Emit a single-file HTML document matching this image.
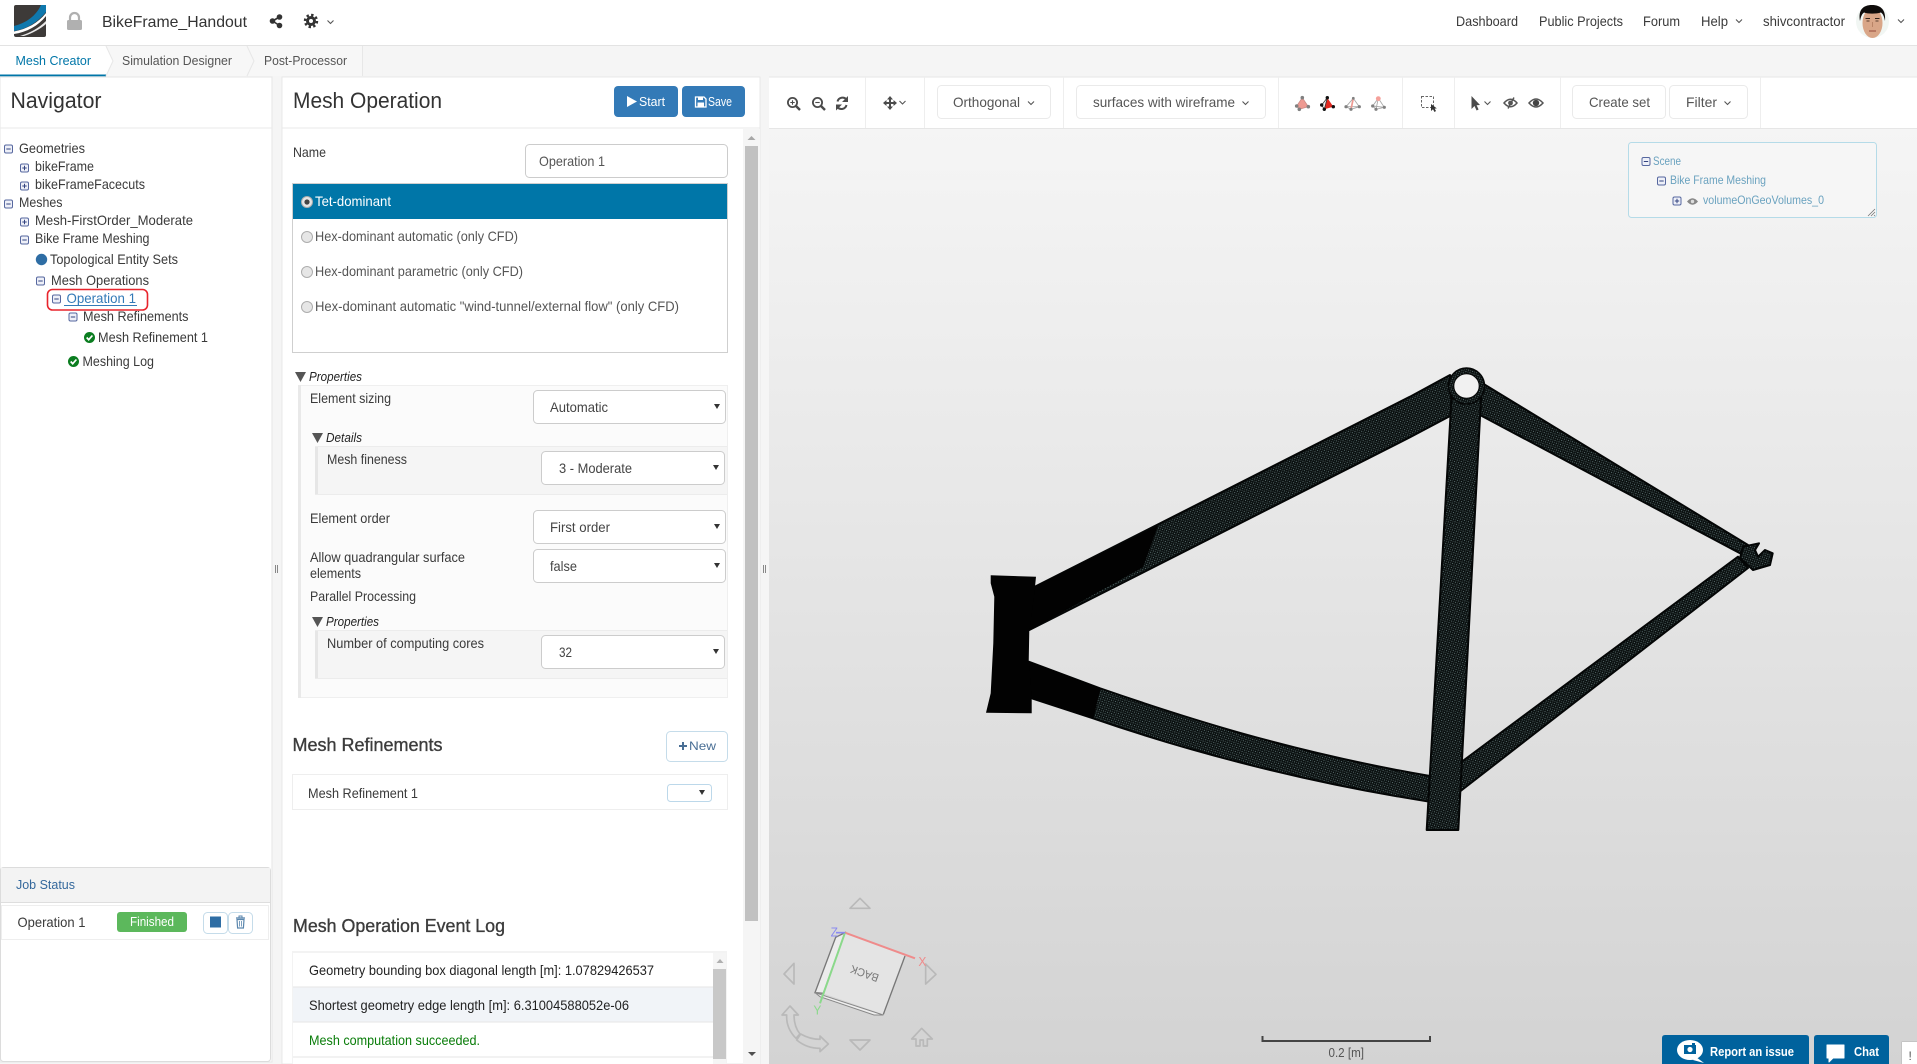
<!DOCTYPE html>
<html lang="en">
<head>
<meta charset="utf-8">
<title>BikeFrame_Handout</title>
<style>
html,body{margin:0;padding:0;width:1917px;height:1064px;overflow:hidden;background:#f5f5f5}
svg{display:block}
text{font-family:"Liberation Sans",sans-serif;font-size:14px;fill:#3a3a3a;white-space:pre}
.s13{font-size:13px}
.i{font-style:italic;fill:#222}
.h{font-size:22px;fill:#333}
.b{font-size:18px;fill:#3c3c3c;stroke:#3c3c3c;stroke-width:.35}
.v{fill:#555}
.sel{fill:#fff;stroke:#ccc;stroke-width:1}
.scn{font-size:12px;fill:#6aa2bf}
.bw{fill:#fff;font-weight:bold;font-size:13px}
.tb{fill:#fff;stroke:#eaeaea;stroke-width:1}
.ln{stroke:#e9e9e9;stroke-width:1}
.ch{fill:none;stroke:#555;stroke-width:1.1}
</style>
</head>
<body>
<svg xmlns="http://www.w3.org/2000/svg" width="1917" height="1064" viewBox="0 0 1917 1064">
<defs>
<linearGradient id="bg" x1="0" y1="0" x2="0" y2="1"><stop offset="0" stop-color="#f5f5f5"/><stop offset="1" stop-color="#d3d3d3"/></linearGradient>
<pattern id="m" width="3" height="3" patternUnits="userSpaceOnUse" patternTransform="rotate(-27)">
<rect width="3" height="3" fill="#0a0f0f"/><rect x="0" y="0" width="1" height="1" fill="#5f7575"/><rect x="1.5" y="1.5" width="1" height="1" fill="#3a4848"/>
</pattern>
<g id="tm"><rect x="-4" y="-4" width="8" height="8" rx="1.5" fill="#eef0f8" stroke="#56679f"/><path d="M-2.2 0H2.2" stroke="#33437f" stroke-width="1"/></g>
<g id="tp"><rect x="-4" y="-4" width="8" height="8" rx="1.5" fill="#eef0f8" stroke="#56679f"/><path d="M-2.2 0H2.2M0 -2.2V2.2" stroke="#33437f" stroke-width="1"/></g>
<g id="ck"><circle r="5.5" fill="#0b7d20"/><path d="M-2.8 0L-.8 2.2L2.9 -2" fill="none" stroke="#fff" stroke-width="1.7"/></g>
<g id="rd"><circle r="5.5" fill="#e6e6e6" stroke="#adadad"/></g>
<path id="ar" d="M-3 -2.5H3L0 2.5Z" fill="#333"/>
<path id="dt" d="M0 0H11L5.5 10Z" fill="#555"/>
<path id="cv" d="M-3 -1.5L0 1.5L3 -1.5" fill="none" stroke="#555" stroke-width="1.1"/>
</defs>

<!-- top bar -->
<rect width="1917" height="45" fill="#fff"/>
<rect y="45" width="1917" height="1" fill="#e3e3e3"/>
<!-- logo -->
<rect x="14" y="5" width="32" height="32" rx="2" fill="#3d3a38"/>
<path d="M46 5V12C38 22 27 29 14 31V26C26 23 36 16 41 5Z" fill="#0f78ad"/>
<path d="M46 16C38 26 27 32 14 34V31.5C27 29 38 23 46 13Z" fill="#fff"/>
<path d="M46 24C40 29 33 33 24 36H20C30 33 39 28 46 21Z" fill="#e9e9e9"/>
<!-- lock -->
<rect x="67" y="20" width="15" height="10" rx="1.5" fill="#b0b0b0"/>
<path d="M70 20V17.5a4.5 4.5 0 0 1 9 0V20" fill="none" stroke="#b0b0b0" stroke-width="2.2"/>
<text x="102" y="27" style="font-size:16px;fill:#333" textLength="145" lengthAdjust="spacingAndGlyphs">BikeFrame_Handout</text>
<!-- share -->
<g fill="#333"><circle cx="272.5" cy="21" r="2.8"/><circle cx="279.5" cy="17" r="2.8"/><circle cx="279.5" cy="25.5" r="2.8"/></g>
<path d="M272.5 21L279.5 17M272.5 21L279.5 25.5" stroke="#333" stroke-width="1.6"/>
<!-- gear -->
<circle cx="311" cy="21" r="5" fill="#333"/><circle cx="311" cy="21" r="6" fill="none" stroke="#333" stroke-width="2.4" stroke-dasharray="2.4 2.3"/><circle cx="311" cy="21" r="2" fill="#fff"/>
<use href="#cv" x="330.5" y="22"/>
<text x="1456" y="26" textLength="62" lengthAdjust="spacingAndGlyphs">Dashboard</text>
<text x="1539" y="26" textLength="84" lengthAdjust="spacingAndGlyphs">Public Projects</text>
<text x="1643" y="26" textLength="37" lengthAdjust="spacingAndGlyphs">Forum</text>
<text x="1701" y="26" textLength="27" lengthAdjust="spacingAndGlyphs">Help</text>
<use href="#cv" x="1739" y="21"/>
<text x="1763" y="26" textLength="82" lengthAdjust="spacingAndGlyphs">shivcontractor</text>
<!-- avatar -->
<circle cx="1872.5" cy="21.5" r="16.5" fill="#f1f6f3"/>
<ellipse cx="1872.5" cy="23" rx="10" ry="15" fill="#d9a688"/>
<path d="M1860 21C1858 10 1863 5 1872 5C1881 5 1886 10 1885 21C1884 16 1883 14 1881 12.5C1876 14 1868 14 1864 12.5C1862 14 1861 16 1860 21Z" fill="#0f0c0b"/>
<path d="M1865.5 18.5H1870M1875 18.5H1879.5" stroke="#33231b" stroke-width="1.1"/>
<path d="M1866.5 21H1869.5M1875.5 21H1878.5" stroke="#5a4030" stroke-width="1"/>
<path d="M1872.5 22V27" stroke="#b98467" stroke-width="1"/>
<path d="M1869 31H1876" stroke="#a5604f" stroke-width="1.3"/>
<use href="#cv" x="1901" y="21"/>

<!-- tabs -->
<rect y="46" width="362" height="30" fill="#f7f7f7"/>
<rect x="0" y="46" width="106" height="30" fill="#fff"/>
<rect x="0" y="74.5" width="106" height="1.8" fill="#0076a8"/>
<path d="M106 46L113 61L106 76" fill="#fff" stroke="#e7e7e7"/>
<path d="M247 46L254 61L247 76" fill="none" stroke="#e7e7e7"/>
<path d="M362.5 46V76" stroke="#e7e7e7"/>
<text x="15.5" y="65" style="fill:#0076a8" class="s13" textLength="75.5" lengthAdjust="spacingAndGlyphs">Mesh Creator</text>
<text x="122" y="65" class="s13" style="fill:#555" textLength="110" lengthAdjust="spacingAndGlyphs">Simulation Designer</text>
<text x="264" y="65" class="s13" style="fill:#555" textLength="83" lengthAdjust="spacingAndGlyphs">Post-Processor</text>

<!-- navigator -->
<rect x="0" y="77" width="272" height="985" fill="#fff" stroke="#e6e6e6"/>
<path d="M0 128H272" class="ln"/>
<text x="10.5" y="108" class="h" textLength="91" lengthAdjust="spacingAndGlyphs">Navigator</text>
<use href="#tm" x="8.5" y="149"/><text x="19" y="153" textLength="66" lengthAdjust="spacingAndGlyphs">Geometries</text>
<use href="#tp" x="24.5" y="168"/><text x="35" y="171" textLength="59" lengthAdjust="spacingAndGlyphs">bikeFrame</text>
<use href="#tp" x="24.5" y="186"/><text x="35" y="189" textLength="110" lengthAdjust="spacingAndGlyphs">bikeFrameFacecuts</text>
<use href="#tm" x="8.5" y="204"/><text x="19" y="207" textLength="43.5" lengthAdjust="spacingAndGlyphs">Meshes</text>
<use href="#tp" x="24.5" y="222"/><text x="35" y="225" textLength="158" lengthAdjust="spacingAndGlyphs">Mesh-FirstOrder_Moderate</text>
<use href="#tm" x="24.5" y="240"/><text x="35" y="243" textLength="114.5" lengthAdjust="spacingAndGlyphs">Bike Frame Meshing</text>
<circle cx="41.5" cy="259.5" r="5.7" fill="#2e6da4"/><text x="50" y="264" textLength="128" lengthAdjust="spacingAndGlyphs">Topological Entity Sets</text>
<use href="#tm" x="40.5" y="281"/><text x="51" y="285" textLength="98" lengthAdjust="spacingAndGlyphs">Mesh Operations</text>
<rect x="47.5" y="289.5" width="100" height="20.5" rx="5" fill="#fff" stroke="#e8242c" stroke-width="1.6"/>
<use href="#tm" x="56.5" y="299"/>
<text x="66.5" y="303" style="fill:#337ab7" textLength="69.5" lengthAdjust="spacingAndGlyphs">Operation 1</text>
<path d="M64 305.5H137" stroke="#337ab7"/>
<use href="#tm" x="73" y="317"/><text x="83" y="321" textLength="105.5" lengthAdjust="spacingAndGlyphs">Mesh Refinements</text>
<use href="#ck" x="89.5" y="337.5"/><text x="98" y="342" textLength="110" lengthAdjust="spacingAndGlyphs">Mesh Refinement 1</text>
<use href="#ck" x="73.5" y="361.5"/><text x="82.5" y="366" textLength="71.5" lengthAdjust="spacingAndGlyphs">Meshing Log</text>

<!-- job status -->
<rect x="0.5" y="867.5" width="270" height="194" rx="3" fill="#fff" stroke="#dcdcdc"/>
<rect x="1" y="868" width="269" height="34" fill="#f3f3f3"/>
<path d="M1 902.5H270" stroke="#dedede"/>
<text x="16" y="889" style="fill:#34689c" class="s13" textLength="59" lengthAdjust="spacingAndGlyphs">Job Status</text>
<rect x="1.5" y="905.5" width="267" height="34" fill="#fff" stroke="#eee"/>
<text x="17.5" y="927" textLength="68" lengthAdjust="spacingAndGlyphs">Operation 1</text>
<rect x="117" y="912" width="70" height="20" rx="3" fill="#5cb85c"/>
<text x="130" y="926" style="fill:#fff;font-size:13px" textLength="44" lengthAdjust="spacingAndGlyphs">Finished</text>
<rect x="203.5" y="912.5" width="24" height="21" rx="4" fill="#fff" stroke="#c5dcea"/>
<rect x="210" y="916.5" width="11" height="11" fill="#2e6da4"/>
<rect x="228.5" y="912.5" width="24" height="21" rx="4" fill="#fff" stroke="#c5dcea"/>
<path d="M237 919.5H244L243.4 928H237.6Z" fill="none" stroke="#5a86ad" stroke-width="1.2"/><path d="M239.5 921V926.5M241.5 921V926.5" stroke="#5a86ad" stroke-width=".8"/><path d="M236 918H245" stroke="#5a86ad" stroke-width="1.3"/><path d="M239 917.5V916H242V917.5" fill="none" stroke="#5a86ad"/>

<!-- splitters -->
<path d="M275.5 565V573M277.5 565V573M763.5 565V573M765.5 565V573" stroke="#888" stroke-width="1"/>

<!-- mesh operation panel -->
<rect x="282" y="77" width="478" height="987" fill="#fff" stroke="#e8e8e8"/>
<path d="M282 128H760" class="ln"/>
<text x="293" y="108" class="h" textLength="149" lengthAdjust="spacingAndGlyphs">Mesh Operation</text>
<rect x="614" y="86" width="64" height="31" rx="4" fill="#337ab7"/>
<path d="M627 96L637 101.5L627 107Z" fill="#fff"/>
<text x="639" y="106" class="s13" style="fill:#fff" textLength="26" lengthAdjust="spacingAndGlyphs">Start</text>
<rect x="682" y="86" width="63" height="31" rx="4" fill="#337ab7"/>
<path d="M695.5 97H704L706 99V107H695.5Z" fill="none" stroke="#fff" stroke-width="1.3"/><rect x="698" y="97" width="5" height="3" fill="#fff"/><rect x="697.5" y="102.5" width="6.5" height="4" fill="#fff"/>
<text x="708" y="106" class="s13" style="fill:#fff" textLength="24" lengthAdjust="spacingAndGlyphs">Save</text>
<!-- scrollbar -->
<rect x="743" y="129" width="17" height="935" fill="#f5f5f5"/>
<rect x="745" y="146" width="13" height="775" fill="#c1c1c1"/>
<path d="M747.5 140L751.5 136L755.5 140Z" fill="#a8a8a8"/>
<path d="M748 1052H756L752 1056Z" fill="#505050"/>

<text x="293" y="157" textLength="33" lengthAdjust="spacingAndGlyphs">Name</text>
<rect x="525.5" y="144.5" width="202" height="33" rx="4" class="sel"/>
<text x="539" y="166" style="fill:#555" textLength="66" lengthAdjust="spacingAndGlyphs">Operation 1</text>

<rect x="292.5" y="183.5" width="435" height="169" fill="#fff" stroke="#cfcfcf"/>
<rect x="293" y="184" width="434" height="35" fill="#0076a8"/>
<use href="#rd" x="307" y="202"/><circle cx="307" cy="202" r="2.6" fill="#444"/>
<text x="315" y="206" style="fill:#fff" textLength="76" lengthAdjust="spacingAndGlyphs">Tet-dominant</text>
<use href="#rd" x="307" y="237"/>
<text x="315" y="241" class="v" textLength="203" lengthAdjust="spacingAndGlyphs">Hex-dominant automatic (only CFD)</text>
<use href="#rd" x="307" y="272"/>
<text x="315" y="276" class="v" textLength="208" lengthAdjust="spacingAndGlyphs">Hex-dominant parametric (only CFD)</text>
<use href="#rd" x="307" y="307"/>
<text x="315" y="311" class="v" textLength="364" lengthAdjust="spacingAndGlyphs">Hex-dominant automatic "wind-tunnel/external flow" (only CFD)</text>

<!-- properties -->
<use href="#dt" x="295" y="372"/>
<text x="309" y="381" class="i s13" textLength="53" lengthAdjust="spacingAndGlyphs">Properties</text>
<rect x="298.5" y="385.5" width="429" height="312" fill="#fbfbfb" stroke="#efefef"/>
<rect x="298" y="385" width="3" height="313" fill="#e9e9e9"/>
<text x="310" y="403" textLength="81" lengthAdjust="spacingAndGlyphs">Element sizing</text>
<rect x="533.5" y="390.5" width="192" height="33" rx="4" class="sel"/>
<text x="550" y="412" style="fill:#444" textLength="58" lengthAdjust="spacingAndGlyphs">Automatic</text>
<use href="#ar" x="717" y="406.5"/>

<use href="#dt" x="312" y="433"/>
<text x="326" y="442" class="i s13" textLength="36" lengthAdjust="spacingAndGlyphs">Details</text>
<rect x="315" y="446" width="412" height="49" fill="#f5f5f5"/>
<rect x="315" y="446" width="3" height="49" fill="#e6e6e6"/>
<path d="M315 446.5H727M315 494.5H727" stroke="#ececec"/>
<text x="327" y="464" textLength="80" lengthAdjust="spacingAndGlyphs">Mesh fineness</text>
<rect x="541.5" y="451.5" width="183" height="33" rx="4" class="sel"/>
<text x="559" y="473" style="fill:#444" textLength="73" lengthAdjust="spacingAndGlyphs">3 - Moderate</text>
<use href="#ar" x="716" y="467.5"/>

<text x="310" y="523" textLength="80" lengthAdjust="spacingAndGlyphs">Element order</text>
<rect x="533.5" y="510.5" width="192" height="33" rx="4" class="sel"/>
<text x="550" y="532" style="fill:#444" textLength="60" lengthAdjust="spacingAndGlyphs">First order</text>
<use href="#ar" x="717" y="526.5"/>

<text x="310" y="562" textLength="155" lengthAdjust="spacingAndGlyphs">Allow quadrangular surface</text>
<text x="310" y="578" textLength="51" lengthAdjust="spacingAndGlyphs">elements</text>
<rect x="533.5" y="549.5" width="192" height="33" rx="4" class="sel"/>
<text x="550" y="571" style="fill:#444" textLength="27" lengthAdjust="spacingAndGlyphs">false</text>
<use href="#ar" x="717" y="565.5"/>

<text x="310" y="601" textLength="106" lengthAdjust="spacingAndGlyphs">Parallel Processing</text>
<use href="#dt" x="312" y="617"/>
<text x="326" y="626" class="i s13" textLength="53" lengthAdjust="spacingAndGlyphs">Properties</text>
<rect x="315" y="630" width="412" height="49" fill="#f5f5f5"/>
<rect x="315" y="630" width="3" height="49" fill="#e6e6e6"/>
<path d="M315 630.5H727M315 678.5H727" stroke="#ececec"/>
<text x="327" y="648" textLength="157" lengthAdjust="spacingAndGlyphs">Number of computing cores</text>
<rect x="541.5" y="635.5" width="183" height="33" rx="4" class="sel"/>
<text x="559" y="657" style="fill:#444" textLength="13" lengthAdjust="spacingAndGlyphs">32</text>
<use href="#ar" x="716" y="651.5"/>

<!-- refinements -->
<text x="292.5" y="751" class="b" textLength="150" lengthAdjust="spacingAndGlyphs">Mesh Refinements</text>
<rect x="666.5" y="731.5" width="61" height="30" rx="4" fill="#fff" stroke="#c5dcea"/>
<path d="M679 746H687M683 742V750" stroke="#4a6f95" stroke-width="2"/>
<text x="689" y="750" style="fill:#4a6f95;font-size:12px" textLength="27" lengthAdjust="spacingAndGlyphs">New</text>
<rect x="292.5" y="774.5" width="435" height="35" fill="#fff" stroke="#eee"/>
<text x="308" y="798" textLength="110" lengthAdjust="spacingAndGlyphs">Mesh Refinement 1</text>
<rect x="667.5" y="784.5" width="44" height="17" rx="3" fill="#fff" stroke="#bcd8ea"/>
<use href="#ar" x="702" y="792.5" />

<!-- event log -->
<text x="293" y="932" class="b" textLength="212" lengthAdjust="spacingAndGlyphs">Mesh Operation Event Log</text>
<rect x="292" y="951" width="435" height="113" fill="#f3f3f3"/>
<rect x="293" y="953" width="420" height="111" fill="#fff"/>
<rect x="293" y="987" width="420" height="35" fill="#f1f4f8"/>
<path d="M293 987H713M293 1022H713M293 1057H713" stroke="#e6e6e6"/>
<text x="309" y="975" style="fill:#222" textLength="345" lengthAdjust="spacingAndGlyphs">Geometry bounding box diagonal length [m]: 1.07829426537</text>
<text x="309" y="1010" style="fill:#222" textLength="320" lengthAdjust="spacingAndGlyphs">Shortest geometry edge length [m]: 6.31004588052e-06</text>
<text x="309" y="1045" style="fill:#0a7d0a" textLength="171" lengthAdjust="spacingAndGlyphs">Mesh computation succeeded.</text>
<rect x="713" y="953" width="13" height="111" fill="#f5f5f5"/>
<rect x="713" y="969" width="13" height="90" fill="#c8c8c8"/>
<path d="M716.5 963L720 959L723.5 963Z" fill="#b0b0b0"/>

<!-- viewer -->
<rect x="769" y="128" width="1148" height="936" fill="url(#bg)"/>
<rect x="769" y="77" width="1148" height="51" fill="#fff"/>
<path d="M769 77H1917M769 128.5H1917" stroke="#e6e6e6"/>
<path d="M865.5 77V128M924.5 77V128M1063.5 77V128M1278.5 77V128M1402.5 77V128M1454.5 77V128M1560.5 77V128M1760.5 77V128" stroke="#eeeeee"/>
<!-- zoom icons -->
<g fill="none" stroke="#4b4b4b" stroke-width="1.8">
<circle cx="792.5" cy="102.5" r="4.6"/><path d="M796 106L800 110" stroke-width="2.4"/><path d="M790.3 102.5H794.7M792.5 100.3V104.7" stroke-width="1.1"/>
<circle cx="817.5" cy="102.5" r="4.6"/><path d="M821 106L825 110" stroke-width="2.4"/><path d="M815.3 102.5H819.7" stroke-width="1.1"/>
<path d="M837.5 101.5A5.2 5.2 0 0 1 846.5 99.5M846.5 105A5.2 5.2 0 0 1 837.5 107.2" stroke-width="2"/>
</g>
<path d="M848 96V102H842Z M836 110.5V104.5H842Z" fill="#4b4b4b"/>
<g fill="#4b4b4b"><path d="M884 103H896M890 98V109" stroke="#4b4b4b" stroke-width="2"/><path d="M890 96L893 99.5H887ZM890 110L893 106.5H887ZM883 103L886.5 100V106ZM897 103L893.5 100V106Z"/></g>
<use href="#cv" x="902.5" y="102.5"/>

<rect x="937.5" y="85.5" width="113" height="33" rx="4" class="tb"/>
<text x="953" y="107" class="v" textLength="67" lengthAdjust="spacingAndGlyphs">Orthogonal</text>
<use href="#cv" x="1031" y="103"/>
<rect x="1076.5" y="85.5" width="189" height="33" rx="4" class="tb"/>
<text x="1093" y="107" class="v" textLength="142" lengthAdjust="spacingAndGlyphs">surfaces with wireframe</text>
<use href="#cv" x="1245.5" y="103"/>

<!-- tetra icons -->
<path d="M1302.3 97.7L1296.7 106L1299.3 109.3L1308.3 106.7Z" fill="#ee9a92" stroke="#c98a84" stroke-width=".8"/>
<g fill="#808080"><circle cx="1302.3" cy="97.7" r="1.8"/><circle cx="1296.7" cy="106" r="1.8"/><circle cx="1299.3" cy="109.3" r="1.8"/><circle cx="1308.3" cy="106.7" r="1.8"/></g>
<path d="M1327.3 97.7L1324.3 109.3L1333.3 106.7Z" fill="#e1281f"/><path d="M1327.3 97.7L1321.7 105L1324.3 109.3Z" fill="#f6f6f6" stroke="#333" stroke-width=".8"/>
<g fill="#111"><circle cx="1327.3" cy="97.7" r="1.7"/><circle cx="1321.7" cy="105" r="1.7"/><circle cx="1324.3" cy="109.3" r="1.7"/><circle cx="1333.3" cy="106.7" r="1.7"/></g>
<path d="M1353.3 98.3L1346 106.7L1351 109.3L1359.3 106.7ZM1346 106.7H1359.3" fill="none" stroke="#a8a8a8" stroke-width=".9"/><path d="M1353.3 98.3L1351 109.3" stroke="#ee9a92" stroke-width="1.7"/>
<g fill="#808080"><circle cx="1353.3" cy="98.3" r="1.4"/><circle cx="1346" cy="106.7" r="1.6"/><circle cx="1351" cy="109.3" r="1.6"/><circle cx="1359.3" cy="106.7" r="1.6"/></g>
<path d="M1378.3 98.3L1372.7 106L1376 109.3L1384.3 107.3ZM1378.3 98.3L1376 109.3M1372.7 106L1384.3 107.3" fill="none" stroke="#a8a8a8" stroke-width=".9"/>
<g fill="#808080"><circle cx="1372.7" cy="106" r="1.6"/><circle cx="1376" cy="109.3" r="1.6"/><circle cx="1384.3" cy="107.3" r="1.6"/></g><circle cx="1378.3" cy="98.6" r="2.4" fill="#f5a09a"/>

<!-- selection -->
<rect x="1421.5" y="96.5" width="12" height="11" fill="none" stroke="#666" stroke-dasharray="2.5 1.5"/>
<path d="M1431 104L1431 111L1433 109.3L1434.5 112L1436 111L1434.6 108.6L1436.8 108.4Z" fill="#333"/>
<path d="M1471.5 96V109L1474.5 106L1476.6 110.5L1478.6 109.5L1476.6 105.2L1480 105Z" fill="#4b4b4b"/>
<use href="#cv" x="1487.5" y="103"/>
<g transform="translate(1510.5,103)"><path d="M-6.5 0Q0 -7.5 6.5 0Q0 7.5 -6.5 0Z" fill="none" stroke="#555" stroke-width="1.5"/><circle r="2.4" fill="#555"/><path d="M3.5 -5.5L-2.5 5.5" stroke="#555" stroke-width="1.4"/></g>
<g transform="translate(1536,103)"><path d="M-7 0Q0 -8 7 0Q0 8 -7 0Z" fill="#fff" stroke="#555" stroke-width="1.5"/><circle r="3.2" fill="#444"/></g>

<rect x="1572.5" y="85.5" width="93" height="33" rx="4" class="tb"/>
<text x="1589" y="107" class="v" textLength="61" lengthAdjust="spacingAndGlyphs">Create set</text>
<rect x="1669.5" y="85.5" width="78" height="33" rx="4" class="tb"/>
<text x="1686" y="107" class="v" textLength="31" lengthAdjust="spacingAndGlyphs">Filter</text>
<use href="#cv" x="1727.5" y="103"/>

<!-- scene tree -->
<rect x="1628.5" y="142.5" width="248" height="75" rx="3" fill="#f6f6f6" stroke="#b5dbe8"/>
<use href="#tm" x="1646" y="161.5"/>
<text x="1653" y="165" class="scn" textLength="28" lengthAdjust="spacingAndGlyphs">Scene</text>
<use href="#tm" x="1661.5" y="181"/>
<text x="1670" y="184" class="scn" textLength="96" lengthAdjust="spacingAndGlyphs">Bike Frame Meshing</text>
<use href="#tp" x="1677" y="201"/>
<path d="M1687 201.5Q1692.5 195 1698 201.5Q1692.5 208 1687 201.5Z" fill="#888"/><circle cx="1692.5" cy="201.5" r="1.7" fill="#ddd"/>
<text x="1703" y="204" class="scn" textLength="121" lengthAdjust="spacingAndGlyphs">volumeOnGeoVolumes_0</text>
<path d="M1868 216L1875 209M1871 216L1875 212M1874 216L1875 215" stroke="#777" stroke-width=".8"/>

<!-- bike frame -->
<g stroke="#040606" stroke-width="2" stroke-linejoin="round">
<path d="M1028.7 661.7L1100 688.3C1180 716 1290 752 1430 776L1430 801.7C1290 780 1170 745 1093 718.3L1031.7 698.3Z" fill="url(#m)"/>
<path d="M1035 586.7L1410 396.7L1450 375L1452 415L1410 437.3L1029.3 630Z" fill="url(#m)"/>
<path d="M1482 383L1748 545L1740 553.3L1480 415Z" fill="url(#m)"/>
<path d="M1738 556.7L1748 568L1458 793L1460 763Z" fill="url(#m)"/>
<path d="M1451.5 398H1481L1458.3 830H1426.7Z" fill="url(#m)"/>
<path d="M1743 546.7L1759 543.3L1755 550L1758 556.7L1765 550L1772.7 553.3L1770 565L1753 570L1740 558Z" fill="url(#m)"/>
</g>
<path d="M1035 586.7L1157 526.5L1143 566.5L1029.3 630Z" fill="#020202" stroke="#020202"/>
<path d="M1028.7 661.7L1100 688.3L1093 718.3L1031.7 698.3Z" fill="#020202" stroke="#020202"/>
<path d="M990.7 575.3L1036 576.7L1035 586.7L1029.3 630L1028.7 661.7L1031.7 700L1031.7 713.3L986 712.7L990.7 693.3L993.3 643.3L994.3 596.7L990.7 583.3Z" fill="#020202"/>
<circle cx="1466.5" cy="386" r="18" fill="url(#m)" stroke="#050707" stroke-width="1.5"/>
<ellipse cx="1466.5" cy="386" rx="12.7" ry="12.2" fill="#f1f1f1" stroke="#050707" stroke-width="1"/>

<!-- gizmo -->
<g transform="translate(770,880) scale(.33333)">
<g fill="none" stroke="#b9b9b9" stroke-width="5" stroke-linejoin="round">
<path d="M240 85L270 55L300 85Z"/>
<path d="M240 480H300L270 510Z"/>
<path d="M72 250L42 282L72 312Z"/>
<path d="M467 252L498 283L467 312Z"/>
<path d="M60 378L85 405H72Q72 440 90 462L78 475Q48 445 50 405H36Z"/>
<path d="M175 492L150 468V478Q120 478 92 462L80 480Q110 505 150 505V515Z"/>
<path d="M455 445L487 477H472V498H460V480H450V498H438V477H425Z"/>
</g>
<path d="M197 172L225 158L160 340L135 338Z" fill="#ececec" stroke="#777" stroke-width="4"/>
<path d="M135 338L340 405L312 405L150 350Z" fill="#efefef" stroke="#888" stroke-width="3"/>
<path d="M225 158L405 228L340 403L160 340Z" fill="#e4e4e4"/>
<path d="M405 228L340 403" stroke="#777" stroke-width="4"/>
<path d="M225 158L435 235" stroke="#ef8b8b" stroke-width="6"/>
<path d="M225 158L150 370" stroke="#8bd98b" stroke-width="6"/>
<path d="M198 158H225" stroke="#8a8af0" stroke-width="5"/>
<text x="445" y="258" style="font-size:38px;fill:#ef8b8b" textLength="24" lengthAdjust="spacingAndGlyphs">X</text>
<text x="130" y="404" style="font-size:38px;fill:#8bd98b" textLength="24" lengthAdjust="spacingAndGlyphs">Y</text>
<text x="182" y="170" style="font-size:38px;fill:#8a8af0" textLength="22" lengthAdjust="spacingAndGlyphs">Z</text>
<text transform="translate(283,282) rotate(200)" x="-44" y="13" style="font-size:34px;fill:#777" textLength="88" lengthAdjust="spacingAndGlyphs">BACK</text>
</g>

<!-- scale -->
<path d="M1262.5 1036V1041H1430V1036" fill="none" stroke="#444" stroke-width="2"/>
<text x="1328.5" y="1057" style="font-size:13px;fill:#555" textLength="35.5" lengthAdjust="spacingAndGlyphs">0.2 [m]</text>

<!-- bottom buttons -->
<path d="M1662 1064V1038Q1662 1035 1665 1035H1806Q1809 1035 1809 1038V1064Z" fill="#00629d"/>
<ellipse cx="1690" cy="1050" rx="13" ry="10" fill="#fff"/><path d="M1696 1057L1704 1063L1693 1060Z" fill="#fff"/>
<rect x="1684" y="1045" width="12" height="9" fill="#00629d"/><circle cx="1690" cy="1049.5" r="2.6" fill="#fff"/><rect x="1692" y="1043" width="3" height="2" fill="#00629d"/>
<text x="1710" y="1056" class="bw" textLength="84" lengthAdjust="spacingAndGlyphs">Report an issue</text>
<path d="M1814 1064V1038Q1814 1035 1817 1035H1886Q1889 1035 1889 1038V1064Z" fill="#00629d"/>
<path d="M1827 1045H1844V1058H1833L1829 1062V1058H1827Z" fill="#fff" stroke="#fff" stroke-linejoin="round"/>
<text x="1854" y="1056" class="bw" textLength="25" lengthAdjust="spacingAndGlyphs">Chat</text>
<path d="M1917 1041.5H1903Q1901.5 1041.5 1901.5 1043V1064" fill="#fff" stroke="#c4c4c4"/>
<rect x="1902" y="1042" width="15" height="22" fill="#fff"/>
<text x="1908.5" y="1060" style="font-size:12px;fill:#555">!</text>
</svg>
</body>
</html>
